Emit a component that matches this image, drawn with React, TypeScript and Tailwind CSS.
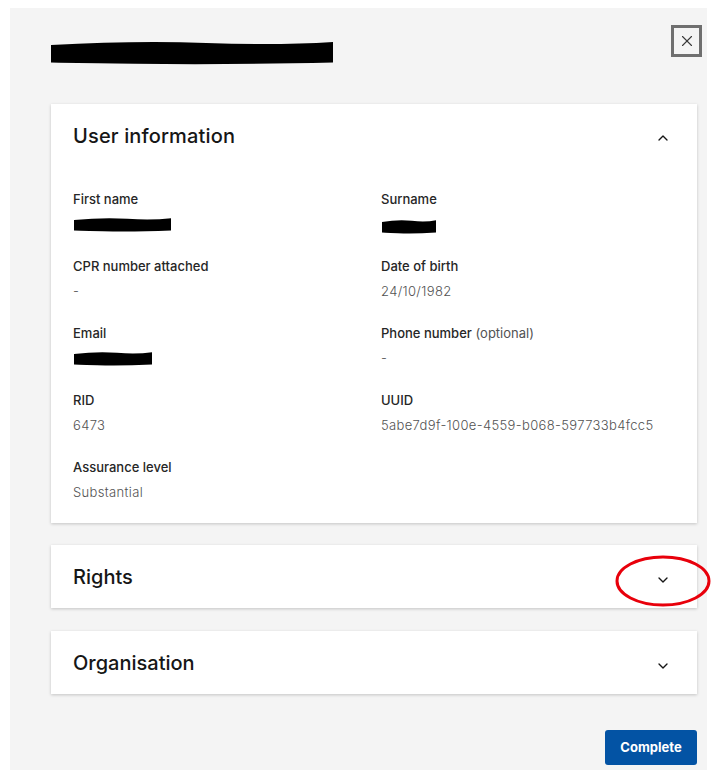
import React from 'react';
import { ChevronUp, ChevronDown, X } from 'lucide-react';

const font = { fontFamily: 'Inter, "Noto Sans", sans-serif' };

// black marker strokes hiding personal data
const Redaction = ({ w, h }: { w: number; h: number }) => (
  <svg width={w} height={h} viewBox={`0 0 ${w} ${h}`} className="block">
    <path
      d={`M1 ${h * 0.2} Q ${w * 0.3} ${h * 0.02} ${w * 0.55} ${h * 0.12} T ${w - 1} ${h * 0.08} L ${w - 1} ${h * 0.9} Q ${w * 0.6} ${h} ${w * 0.3} ${h * 0.95} T 1 ${h * 0.9} Z`}
      fill="#000"
    />
  </svg>
);

const Field = ({ label, value, hint }: { label: string; value: React.ReactNode; hint?: string }) => (
  <div>
    <div className="text-[13px] leading-[18px] font-medium text-[#262626]">
      {label}
      {hint && <span className="font-normal text-[#525252]"> {hint}</span>}
    </div>
    <div className="mt-[7px] h-[18px] text-[13px] leading-[18px] font-light tracking-[0.35px] text-[#525252] flex items-center">{value}</div>
  </div>
);

const CollapsedCard = ({ title, annotated }: { title: string; annotated?: boolean }) => (
  <div className="relative bg-white shadow-[0_1px_3px_rgba(0,0,0,0.2)] h-[63px] flex items-center justify-between pl-[22px] pr-[26px]">
    <h3 className="text-[20px] font-medium text-[#161616]">{title}</h3>
    <ChevronDown size={16} strokeWidth={2} className="text-[#161616] mt-[6px]" />
    {annotated && (
      <svg width="100" height="56" viewBox="0 0 100 56" className="absolute right-[-16px] top-[8px] overflow-visible">
        <ellipse cx="50" cy="28" rx="46" ry="24" fill="none" stroke="#e8000b" strokeWidth="3" />
      </svg>
    )}
  </div>
);

export default function App() {
  return (
    <div className="min-h-[780px] bg-white pt-2" style={font}>
      <div className="ml-[10px] w-[697px] h-[762px] bg-[#f4f4f4] flex flex-col">
        <div className="flex justify-between items-start pl-[40px] pr-[5px] pt-[17px]">
          <div className="mt-[15px]">
            <Redaction w={284} h={25} />
          </div>
          <button className="w-[31px] h-[32px] border-[3px] border-[#6f6f6f] flex items-center justify-center bg-transparent">
            <X size={18} strokeWidth={1.5} className="text-[#393939]" />
          </button>
        </div>

        <div className="pl-[41px] pr-[10px] mt-[39px] flex flex-col">
          <div className="bg-white shadow-[0_1px_3px_rgba(0,0,0,0.2)]">
            <div className="h-16 flex items-center justify-between pl-[22px] pr-[26px]">
              <h3 className="text-[20px] font-medium text-[#161616] tracking-[0.15px]">User information</h3>
              <ChevronUp size={16} strokeWidth={2} className="text-[#161616] mt-[4px]" />
            </div>
            <div className="grid grid-cols-[308px_1fr] gap-y-[24px] pl-[22px] pr-[22px] pt-[22px] pb-[22px]">
              <Field label="First name" value={<Redaction w={99} h={15} />} />
              <Field label="Surname" value={<div className="mt-[4px]"><Redaction w={56} h={15} /></div>} />
              <Field label="CPR number attached" value="-" />
              <Field label="Date of birth" value="24/10/1982" />
              <Field label="Email" value={<Redaction w={80} h={15} />} />
              <Field label="Phone number" hint="(optional)" value="-" />
              <Field label="RID" value="6473" />
              <Field label="UUID" value="5abe7d9f-100e-4559-b068-597733b4fcc5" />
              <Field label="Assurance level" value="Substantial" />
            </div>
          </div>

          <div className="mt-[22px]">
            <CollapsedCard title="Rights" annotated />
          </div>
          <div className="mt-[23px]">
            <CollapsedCard title="Organisation" />
          </div>

          <div className="flex justify-end mt-[36px]">
            <button className="w-[92px] h-[35px] rounded-[3px] bg-[#0353a4] text-white text-[13px] font-bold">
              Complete
            </button>
          </div>
        </div>
      </div>
    </div>
  );
}
